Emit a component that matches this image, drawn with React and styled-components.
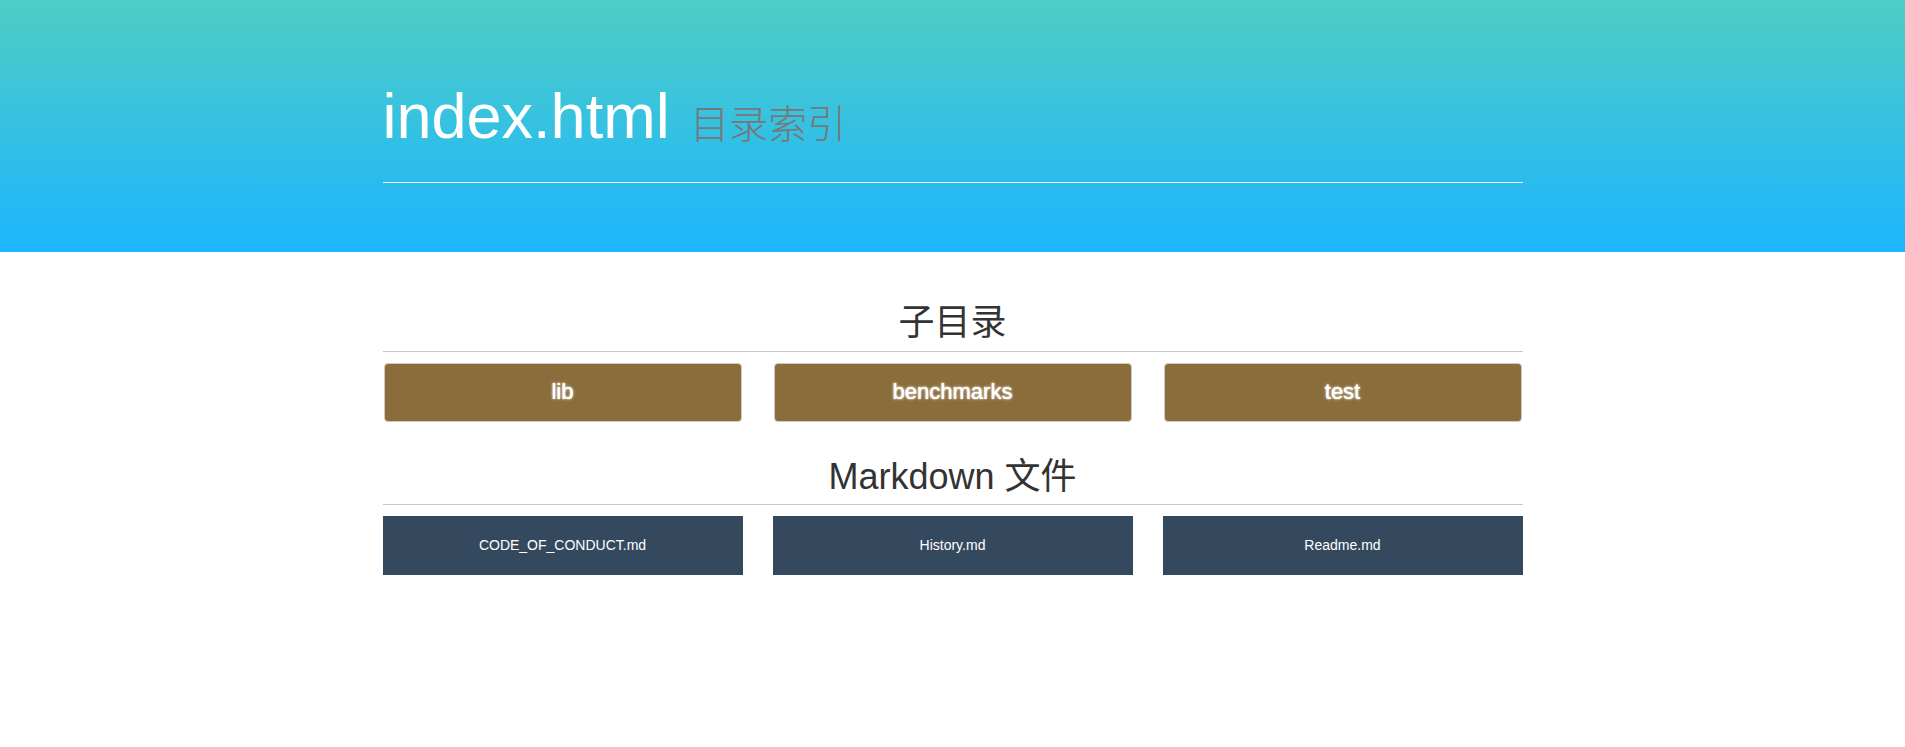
import React from 'react';
import styled, { createGlobalStyle } from 'styled-components';

const GlobalStyle = createGlobalStyle`
  html, body {
    margin: 0;
    padding: 0;
    background: #fff;
  }
  body {
    font-family: "Liberation Sans", Arial, "Noto Sans CJK SC", sans-serif;
    font-size: 14px;
    line-height: 1.42857;
    color: #333;
  }
  * { box-sizing: border-box; }
`;

const Header = styled.header`
  height: 252px;
  padding-top: 82px;
  background: linear-gradient(to bottom, #4ecdc4, #1db5ff);
`;

const Container = styled.div`
  width: 1140px;
  margin: 0 auto;
`;

const Title = styled.h1`
  margin: 0;
  font-size: 63px;
  font-weight: 400;
  line-height: 1.1;
  color: #fff;

  small {
    margin-left: 3px;
    font-size: 39px;
    font-weight: 300;
    color: #777;
    font-family: "Noto Sans CJK SC", sans-serif;
  }
`;

const Rule = styled.hr`
  margin: ${p => p.$top || 0}px 0 ${p => p.$bottom || 0}px;
  border: 0;
  border-top: 1px solid ${p => p.$color || '#c8c8c8'};
`;

const Main = styled.main`
  padding-top: 51px;
`;

const Section = styled.section`
  margin-bottom: ${p => p.$gap || 0}px;
`;

const SectionTitle = styled.h2`
  margin: 0 0 8px;
  text-align: center;
  font-size: 36px;
  font-weight: 400;
  line-height: 1.1;
  color: #333;
`;

const Grid = styled.div`
  display: grid;
  grid-template-columns: repeat(3, 360px);
  justify-content: space-between;
  margin-top: 11px;
`;

const DirButton = styled.a`
  display: flex;
  align-items: center;
  justify-content: center;
  height: 59px;
  margin: 0 1px;
  background: #8a6d3b;
  border: 1px solid #d4cbbd;
  border-radius: 4px;
  color: #fff;
  font-size: 22px;
  text-decoration: none;
  text-shadow: 0 0 3px #fff, 0 0 1px #fff;
`;

const FileButton = styled.a`
  display: flex;
  align-items: center;
  justify-content: center;
  height: 59px;
  background: #34495e;
  color: #fff;
  font-size: 14px;
  text-decoration: none;
`;

const dirs = ['lib', 'benchmarks', 'test'];
const files = ['CODE_OF_CONDUCT.md', 'History.md', 'Readme.md'];

export default function App() {
  return (
    <>
      <GlobalStyle />
      <Header>
        <Container>
          <Title>
            index.html <small>目录索引</small>
          </Title>
          <Rule $top={31} $color="#eee" />
        </Container>
      </Header>
      <Main>
        <Container>
          <Section $gap={35}>
            <SectionTitle>子目录</SectionTitle>
            <Rule />
            <Grid>
              {dirs.map(d => (
                <DirButton key={d} href="#">{d}</DirButton>
              ))}
            </Grid>
          </Section>
          <Section>
            <SectionTitle>Markdown 文件</SectionTitle>
            <Rule />
            <Grid>
              {files.map(f => (
                <FileButton key={f} href="#">{f}</FileButton>
              ))}
            </Grid>
          </Section>
        </Container>
      </Main>
    </>
  );
}
